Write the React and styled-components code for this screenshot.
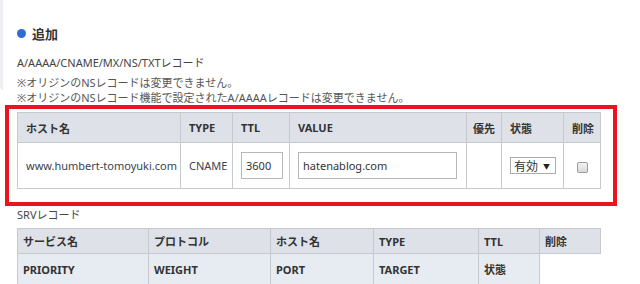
import React from "react";
import styled, { createGlobalStyle } from "styled-components";

const GlobalStyle = createGlobalStyle`
  body {
    margin: 0;
    background: #ffffff;
    font-family: "Noto Sans", "Noto Sans CJK JP", sans-serif;
    color: #333;
  }
`;

const Page = styled.div`
  width: 640px;
  height: 284px;
  overflow: hidden;
`;

const TopBlock = styled.div`
  border-left: 3px solid #eceef2;
  border-bottom-left-radius: 4px;
  padding: 22px 0 0 14px;
  height: 68px;
`;

const Heading = styled.div`
  display: flex;
  align-items: center;
  gap: 6px;
  font-size: 13px;
  font-weight: bold;
  color: #333;
  height: 22px;
`;

const Dot = styled.span`
  width: 9px;
  height: 9px;
  border-radius: 50%;
  background: #2b6fd6;
  display: inline-block;
`;

const Line = styled.div`
  font-size: 11px;
  line-height: 15px;
  color: ${({ $muted }) => ($muted ? "#555" : "#444")};
  margin-top: ${({ $gap }) => $gap || 0}px;
  padding-left: ${({ $indent }) => $indent || 0}px;
  white-space: nowrap;
`;

const Highlight = styled.div`
  margin: 0 0 0 5px;
  width: 596px;
  border: 4px solid #e8141f;
  padding: 3px 0 13px 8px;
`;

const Grid = styled.table`
  border-collapse: collapse;
  table-layout: fixed;
  width: ${({ $w }) => $w}px;
  margin-left: ${({ $ml }) => $ml || 0}px;
`;

const Head = styled.th`
  background: #dee2e8;
  border: 1px solid #c6c9ce;
  height: ${({ $h }) => $h}px;
  padding: 0 ${({ $pad }) => $pad}px;
  text-align: left;
  font-size: 11px;
  font-weight: bold;
  color: #333;
  white-space: nowrap;
  overflow: hidden;
`;

const Cell = styled.td`
  background: ${({ $bg }) => $bg || "#ffffff"};
  border: ${({ $none }) => ($none ? "none" : "1px solid #c6c9ce")};
  height: ${({ $h }) => $h}px;
  padding: 0 ${({ $pad }) => $pad}px;
  font-size: 11px;
  font-weight: ${({ $bold }) => ($bold ? "bold" : "normal")};
  color: ${({ $bold }) => ($bold ? "#333" : "#3a4350")};
  white-space: nowrap;
  text-align: ${({ $center }) => ($center ? "center" : "left")};
  vertical-align: middle;
`;

const TextBox = styled.input`
  box-sizing: border-box;
  width: ${({ $w }) => $w}px;
  height: 27px;
  border: 1px solid #b4b7bb;
  padding: 0 4px;
  font-family: "Noto Sans", "Noto Sans CJK JP", sans-serif;
  font-size: 11px;
  color: #333;
  background: #fff;
  outline: none;
`;

const Select = styled.span`
  box-sizing: border-box;
  display: inline-flex;
  align-items: center;
  gap: 5px;
  height: 17px;
  width: 46px;
  border: 1px solid #a9acb0;
  padding: 0 3px;
  font-size: 12px;
  color: #333;
  background: #fff;
  font-family: "Noto Sans CJK JP", sans-serif;
`;

const Caret = styled.span`
  font-size: 7px;
  color: #222;
`;

const Check = styled.span`
  display: inline-block;
  box-sizing: border-box;
  width: 11px;
  height: 11px;
  border: 1px solid #9a9da2;
  border-radius: 2px;
  background: linear-gradient(#f2f2f2, #d9dadc);
  vertical-align: middle;
`;

const SrvLabel = styled.div`
  font-size: 11px;
  line-height: 15px;
  color: #444;
  margin: 1px 0 6px 17px;
`;

export default function App() {
  const mainCols = [163, 52, 57, 177, 35, 62, 37];
  const srvCols = [131, 122, 103, 105, 61, 61];

  return (
    <Page>
      <GlobalStyle />
      <TopBlock>
        <Heading>
          <Dot />
          追加
        </Heading>
        <Line $gap={11}>A/AAAA/CNAME/MX/NS/TXTレコード</Line>
        <Line $gap={5} $muted>※オリジンのNSレコードは変更できません。</Line>
      </TopBlock>
      <Line $muted $indent={17}>※オリジンのNSレコード機能で設定されたA/AAAAレコードは変更できません。</Line>

      <Highlight>
        <Grid $w={583}>
          <colgroup>
            {mainCols.map((w, i) => (
              <col key={i} style={{ width: w }} />
            ))}
          </colgroup>
          <thead>
            <tr>
              <Head $h={29} $pad={8}>ホスト名</Head>
              <Head $h={29} $pad={8}>TYPE</Head>
              <Head $h={29} $pad={8}>TTL</Head>
              <Head $h={29} $pad={8}>VALUE</Head>
              <Head $h={29} $pad={6}>優先</Head>
              <Head $h={29} $pad={8}>状態</Head>
              <Head $h={29} $pad={8}>削除</Head>
            </tr>
          </thead>
          <tbody>
            <tr>
              <Cell $h={45} $pad={8}>www.humbert-tomoyuki.com</Cell>
              <Cell $h={45} $pad={8}>CNAME</Cell>
              <Cell $h={45} $pad={8}>
                <TextBox $w={42} defaultValue="3600" />
              </Cell>
              <Cell $h={45} $pad={8}>
                <TextBox $w={159} defaultValue="hatenablog.com" />
              </Cell>
              <Cell $h={45} $pad={7}></Cell>
              <Cell $h={45} $pad={8}>
                <Select>
                  有効<Caret>▼</Caret>
                </Select>
              </Cell>
              <Cell $h={45} $pad={8} $center>
                <Check />
              </Cell>
            </tr>
          </tbody>
        </Grid>
      </Highlight>

      <SrvLabel>SRVレコード</SrvLabel>
      <Grid $w={583} $ml={17}>
        <colgroup>
          {srvCols.map((w, i) => (
            <col key={i} style={{ width: w }} />
          ))}
        </colgroup>
        <thead>
          <tr>
            <Head $h={24} $pad={5}>サービス名</Head>
            <Head $h={24} $pad={5}>プロトコル</Head>
            <Head $h={24} $pad={5}>ホスト名</Head>
            <Head $h={24} $pad={5}>TYPE</Head>
            <Head $h={24} $pad={5}>TTL</Head>
            <Head $h={24} $pad={5}>削除</Head>
          </tr>
        </thead>
        <tbody>
          <tr>
            <Cell $h={29} $pad={5} $bg="#e7ebf2" $bold>PRIORITY</Cell>
            <Cell $h={29} $pad={5} $bg="#e7ebf2" $bold>WEIGHT</Cell>
            <Cell $h={29} $pad={5} $bg="#e7ebf2" $bold>PORT</Cell>
            <Cell $h={29} $pad={5} $bg="#e7ebf2" $bold>TARGET</Cell>
            <Cell $h={29} $pad={5} $bg="#e7ebf2" $bold>状態</Cell>
            <Cell $h={29} $none $bg="transparent"></Cell>
          </tr>
        </tbody>
      </Grid>
    </Page>
  );
}
